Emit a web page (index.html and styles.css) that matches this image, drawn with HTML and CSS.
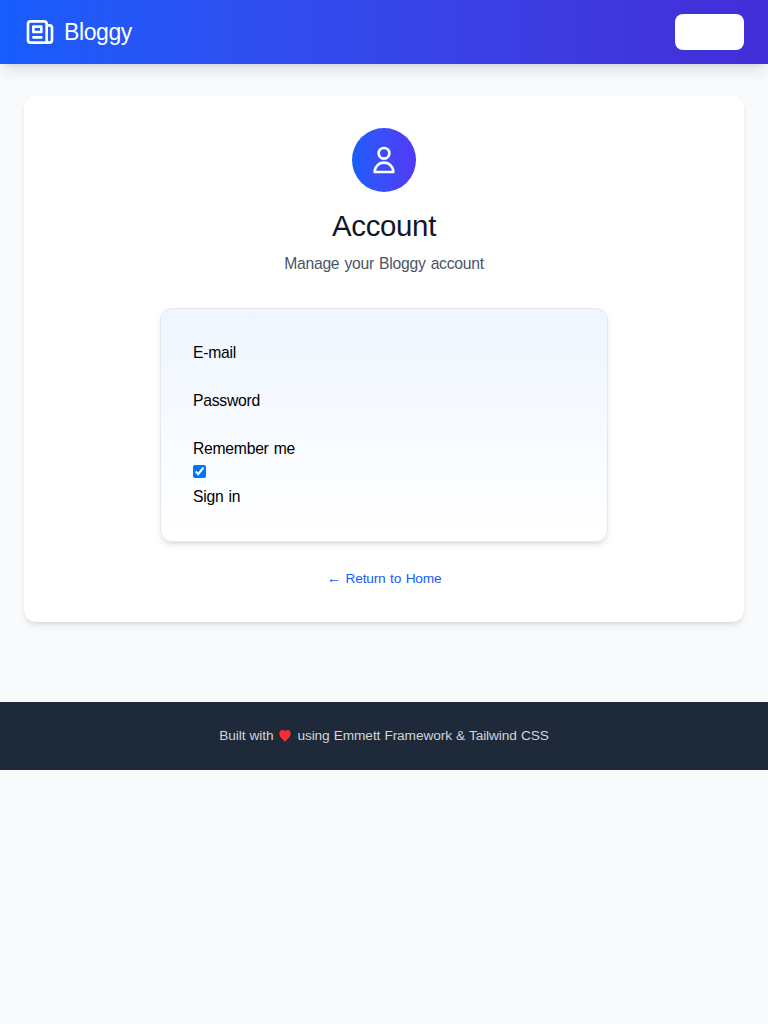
FILE: index.html
```html
<!DOCTYPE html>
<html lang="en"><head><meta charset="utf-8"><title>Bloggy</title><link rel="stylesheet" href="styles.css"></head>
<body>
<header class="header">
<a class="brand"><svg class="brand-icon" viewBox="0 0 24 24"><path d="M19 20H5a2 2 0 01-2-2V6a2 2 0 012-2h10a2 2 0 012 2v1m2 13a2 2 0 01-2-2V7m2 13a2 2 0 002-2V9a2 2 0 00-2-2h-2m-4-3H9M7 16h6M7 8h6v4H7V8z"/></svg><span class="brand-name">Bloggy</span></a>
<a class="header-button"></a>
</header>
<main class="main">
<section class="card">
<div class="avatar"><svg class="avatar-icon" viewBox="0 0 24 24"><path d="M16 7a4 4 0 11-8 0 4 4 0 018 0zM12 14a7 7 0 00-7 7h14a7 7 0 00-7-7z"/></svg></div>
<h1 class="title">Account</h1>
<p class="subtitle">Manage your Bloggy account</p>
<form class="form">
<div class="field"><label>E-mail</label></div>
<div class="field"><label>Password</label></div>
<div class="field"><label for="remember">Remember me</label><input class="check" id="remember" type="checkbox" checked></div>
<div class="submit">Sign in</div>
</form>
<a class="return"><span class="arrow">←</span> Return to Home</a>
</section>
</main>
<footer class="footer"><span>Built with</span><svg class="heart" viewBox="0 0 12 12"><path d="M6 12C4.500 10 .3 7 .3 3.500 .3-.4 4.800-.8 6 1.500 7.200-.8 11.700-.4 11.700 3.500 11.700 7 7.500 10 6 12z"/></svg><span>using Emmett Framework &amp; Tailwind CSS</span></footer>
</body></html>
```
FILE: styles.css
```css
* { box-sizing: border-box; }
body { margin: 0; background: #f9fafb; color: #000; font: 15.7px/24px "Liberation Sans", Arial, sans-serif; letter-spacing: -.25px; word-spacing: 1px; }
.header { height: 64px; padding: 0 24px; display: flex; align-items: center; justify-content: space-between; background: linear-gradient(to right in oklab, #155dfc, #432dd7); box-shadow: 0 10px 15px -3px #0000001a, 0 4px 6px -4px #0000001a; }
.brand { display: flex; align-items: center; gap: 8px; color: #fff; }
.brand-icon { width: 32px; height: 32px; }
.brand-icon, .avatar-icon { fill: none; stroke: #fff; stroke-width: 2; stroke-linecap: round; stroke-linejoin: round; }
.brand-name { font-size: 23px; line-height: 32px; letter-spacing: -.4px; }
.header-button { width: 69px; height: 36px; background: #fff; border-radius: 8px; }
.main { padding: 32px 24px; }
.card { height: 526px; padding: 32px 32px 24px; display: flex; flex-direction: column; align-items: center; background: #fff; border-radius: 12px; box-shadow: 0 4px 6px -1px #0000001a, 0 2px 4px -2px #0000001a; }
.avatar { width: 64px; height: 64px; flex-shrink: 0; display: flex; align-items: center; justify-content: center; border-radius: 50%; background: linear-gradient(to right in oklab, #155dfc, #4f39f6); }
.avatar-icon { width: 32px; height: 32px; }
.title { margin: 16px 0 8px; color: #101828; font-size: 29.4px; line-height: 36px; font-weight: 400; letter-spacing: -.3px; }
.subtitle { margin: 0 0 32px; color: #4a5565; }
.form { width: 448px; height: 234px; flex-shrink: 0; padding: 32px; border: 1px solid #e5e7eb; border-radius: 12px; background: linear-gradient(to bottom in oklab, #eff6ff, #fff); box-shadow: 0 4px 6px -1px #0000001a, 0 2px 4px -2px #0000001a; }
.field { min-height: 48px; display: flex; flex-direction: column; align-items: flex-start; }
.check { width: 13px; height: 13px; margin: 4px 0 0; }
.return { margin-top: 25px; color: #155dfc; font-size: 13.7px; letter-spacing: -.2px; }
.arrow { font-size: 14.500px; line-height: 1; }
.footer { height: 68px; margin-top: 48px; display: flex; align-items: center; justify-content: center; gap: 5px; background: #1e2939; color: #d1d5dc; font-size: 13.7px; letter-spacing: -.1px; word-spacing: .4px; }
.heart { width: 12px; height: 12px; margin: 0 1px; margin-bottom: 1px; fill: #fb2c36; }
```
